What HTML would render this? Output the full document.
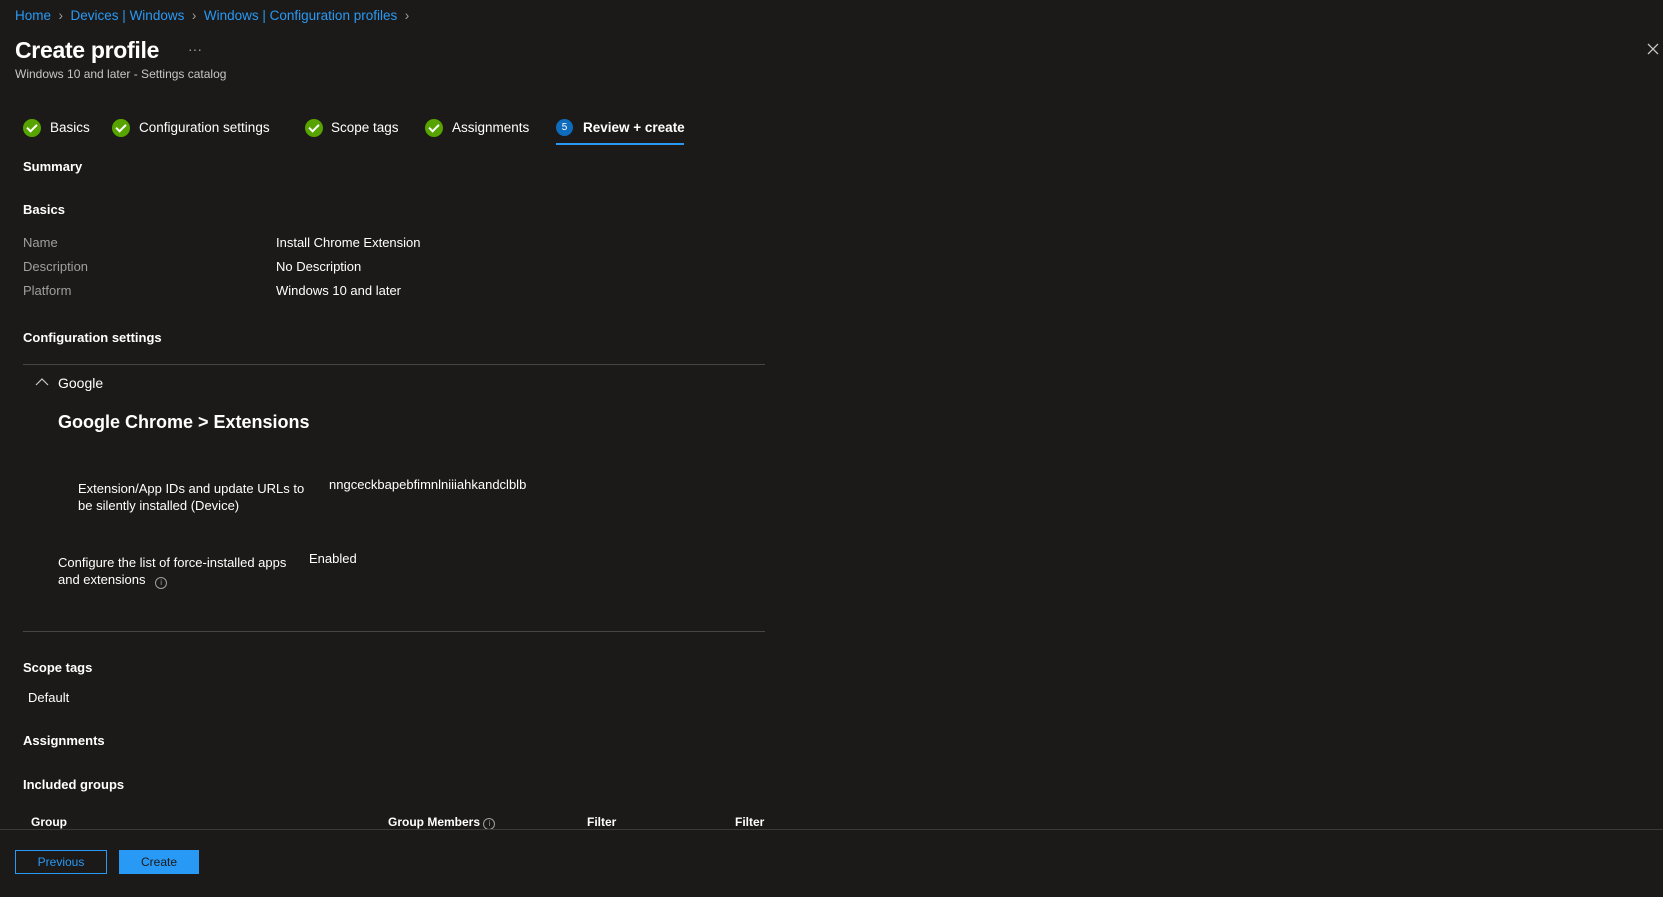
<!DOCTYPE html>
<html><head><meta charset="utf-8"><style>
body{margin:0;width:1663px;height:897px;background:#1b1a19;font-family:"Liberation Sans",sans-serif;color:#fff;position:relative;overflow:hidden}
.a{position:absolute;white-space:nowrap;line-height:16px;font-size:13px}
.b{font-weight:bold}
.g{color:#a19f9d}
.l{color:#2899f5}
.chk{position:absolute;width:18px;height:18px;border-radius:50%;background:#57a300}
.chk:after{content:"";position:absolute;left:6px;top:3px;width:4px;height:8px;border:solid #fff;border-width:0 2px 2px 0;transform:rotate(45deg)}
.hr{position:absolute;height:1px;background:#484644}
</style></head><body>
<div class="a" style="left:15px;top:8px;font-size:13.5px"><span class="l">Home</span> <span class="g">&nbsp;›&nbsp;</span> <span class="l">Devices | Windows</span> <span class="g">&nbsp;›&nbsp;</span> <span class="l">Windows | Configuration profiles</span> <span class="g">&nbsp;›</span></div>
<div class="a" style="left:15px;top:36px;font-size:23px;line-height:28px;font-weight:bold;letter-spacing:-0.3px">Create profile</div>
<div class="a g" style="left:188px;top:41px;font-size:14px">···</div>
<div class="a" style="left:15px;top:66px;font-size:12px;color:#c8c6c4">Windows 10 and later - Settings catalog</div>
<svg style="position:absolute;left:1647px;top:43px" width="12" height="12" viewBox="0 0 12 12"><path d="M1 1L11 11M11 1L1 11" stroke="#c8c6c4" stroke-width="1.3"/></svg>

<div class="chk" style="left:23px;top:119px"></div><div class="a" style="left:50px;top:120px;font-size:13.5px">Basics</div>
<div class="chk" style="left:112px;top:119px"></div><div class="a" style="left:139px;top:120px;font-size:13.5px">Configuration settings</div>
<div class="chk" style="left:305px;top:119px"></div><div class="a" style="left:331px;top:120px;font-size:13.5px">Scope tags</div>
<div class="chk" style="left:425px;top:119px"></div><div class="a" style="left:452px;top:120px;font-size:13.5px">Assignments</div>
<div style="position:absolute;left:556px;top:119px;width:17px;height:17px;border-radius:50%;background:#0f6cbd;color:#fff;font-size:10px;text-align:center;line-height:17px">5</div>
<div class="a b" style="left:583px;top:120px;font-size:13.5px">Review + create</div>
<div style="position:absolute;left:556px;top:143px;width:128px;height:2px;background:#2899f5"></div>

<div class="a b" style="left:23px;top:159px">Summary</div>
<div class="a b" style="left:23px;top:202px">Basics</div>
<div class="a g" style="left:23px;top:235px">Name</div><div class="a" style="left:276px;top:235px">Install Chrome Extension</div>
<div class="a g" style="left:23px;top:259px">Description</div><div class="a" style="left:276px;top:259px">No Description</div>
<div class="a g" style="left:23px;top:283px">Platform</div><div class="a" style="left:276px;top:283px">Windows 10 and later</div>
<div class="a b" style="left:23px;top:330px">Configuration settings</div>
<div class="hr" style="left:23px;top:364px;width:742px"></div>
<svg style="position:absolute;left:35px;top:378px" width="14" height="8" viewBox="0 0 14 8"><path d="M1 7L7 1L13 7" stroke="#c8c6c4" stroke-width="1.2" fill="none"/></svg>
<div class="a" style="left:58px;top:375px;font-size:14px">Google</div>
<div class="a b" style="left:58px;top:412px;font-size:18px;line-height:20px">Google Chrome &gt; Extensions</div>
<div class="a" style="left:78px;top:480px;line-height:17px">Extension/App IDs and update URLs to<br>be silently installed (Device)</div>
<div class="a" style="left:329px;top:477px">nngceckbapebfimnlniiiahkandclblb</div>
<div class="a" style="left:58px;top:554px;line-height:17px">Configure the list of force-installed apps<br>and extensions <span style="display:inline-block;width:10px;height:10px;border:1px solid #a19f9d;border-radius:50%;font-size:8px;line-height:10px;text-align:center;color:#a19f9d;margin-left:6px;vertical-align:-1px">i</span></div>
<div class="a" style="left:309px;top:551px">Enabled</div>
<div class="hr" style="left:23px;top:631px;width:742px"></div>
<div class="a b" style="left:23px;top:660px">Scope tags</div>
<div class="a" style="left:28px;top:690px">Default</div>
<div class="a b" style="left:23px;top:733px">Assignments</div>
<div class="a b" style="left:23px;top:777px">Included groups</div>
<div class="a b" style="left:31px;top:814px;font-size:12px">Group</div>
<div class="a b" style="left:388px;top:814px;font-size:12px">Group Members <span style="display:inline-block;width:10px;height:10px;border:1px solid #a19f9d;border-radius:50%;font-size:8px;line-height:10px;text-align:center;color:#a19f9d;font-weight:normal">i</span></div>
<div class="a b" style="left:587px;top:814px;font-size:12px">Filter</div>
<div class="a b" style="left:735px;top:814px;font-size:12px">Filter</div>
<div class="hr" style="left:0;top:829px;width:1663px;background:#3b3a39"></div>
<div style="position:absolute;left:15px;top:850px;width:90px;height:22px;border:1px solid #2899f5;color:#2899f5;font-size:12px;text-align:center;line-height:22px">Previous</div>
<div style="position:absolute;left:119px;top:850px;width:80px;height:24px;background:#2899f5;color:#1b1a19;font-size:12px;text-align:center;line-height:24px">Create</div>
</body></html>
